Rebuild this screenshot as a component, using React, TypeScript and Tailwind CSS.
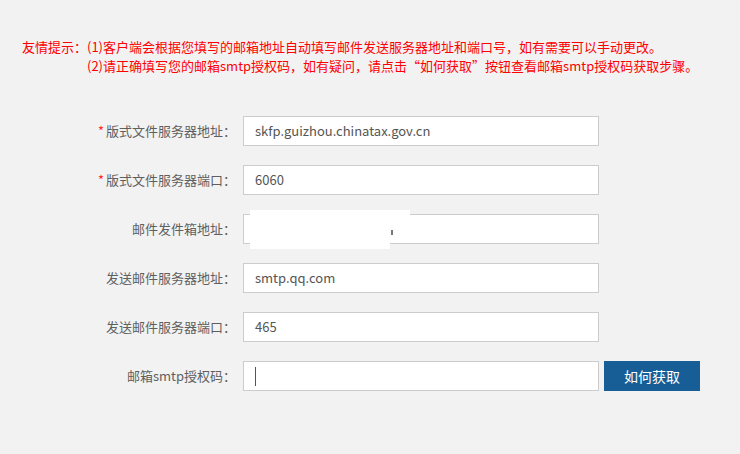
import React from "react";

const FONT = '"Microsoft YaHei", "Noto Sans CJK SC", "Noto Sans", sans-serif';

function Row({
  label,
  required,
  children,
  extra,
}: {
  label: string;
  required?: boolean;
  children: React.ReactNode;
  extra?: React.ReactNode;
}) {
  return (
    <div className="flex items-center h-[30px]">
      <div className="w-[236px] text-right text-[13px] text-[#5f5f5f] leading-[30px] whitespace-nowrap">
        {required && <span className="text-[#ff2a2a] mr-[2px]">*</span>}
        {label}
      </div>
      <div className="relative ml-[7px] w-[356px] h-[30px] border border-[#cccccc] bg-white px-[11px] flex items-center text-[13px] text-[#555]">
        {children}
      </div>
      {extra}
    </div>
  );
}

export default function App() {
  return (
    <div
      className="w-[740px] h-[454px] bg-[#f2f2f2] overflow-hidden"
      style={{ fontFamily: FONT }}
    >
      <div className="pt-[37px] pl-[22px] flex text-[13px] leading-[19px] text-[#ff0000]">
        <span className="whitespace-nowrap">友情提示：</span>
        <div className="whitespace-nowrap">
          <div>(1)客户端会根据您填写的邮箱地址自动填写邮件发送服务器地址和端口号，如有需要可以手动更改。</div>
          <div>(2)请正确填写您的邮箱smtp授权码，如有疑问，请点击“如何获取”按钮查看邮箱smtp授权码获取步骤。</div>
        </div>
      </div>

      <div className="mt-[41px] flex flex-col gap-[19px]">
        <Row label="版式文件服务器地址：" required>
          skfp.guizhou.chinatax.gov.cn
        </Row>
        <Row label="版式文件服务器端口：" required>
          6060
        </Row>
        <Row label="邮件发件箱地址：">
          <div className="absolute left-[6px] top-[-5px] w-[160px] h-[24px] bg-white" />
          <div className="absolute left-[6px] top-[18px] w-[140px] h-[16px] bg-white" />
          <div className="absolute left-[147px] top-[15px] w-[2px] h-[5px] bg-[#777]" />
        </Row>
        <Row label="发送邮件服务器地址：">smtp.qq.com</Row>
        <Row label="发送邮件服务器端口：">465</Row>
        <Row
          label="邮箱smtp授权码："
          extra={
            <button className="ml-[5px] w-[96px] h-[30px] bg-[#175e96] text-white text-[14px] leading-[30px]">
              如何获取
            </button>
          }
        >
          <div className="w-[1px] h-[19px] bg-[#555]" />
        </Row>
      </div>
    </div>
  );
}
